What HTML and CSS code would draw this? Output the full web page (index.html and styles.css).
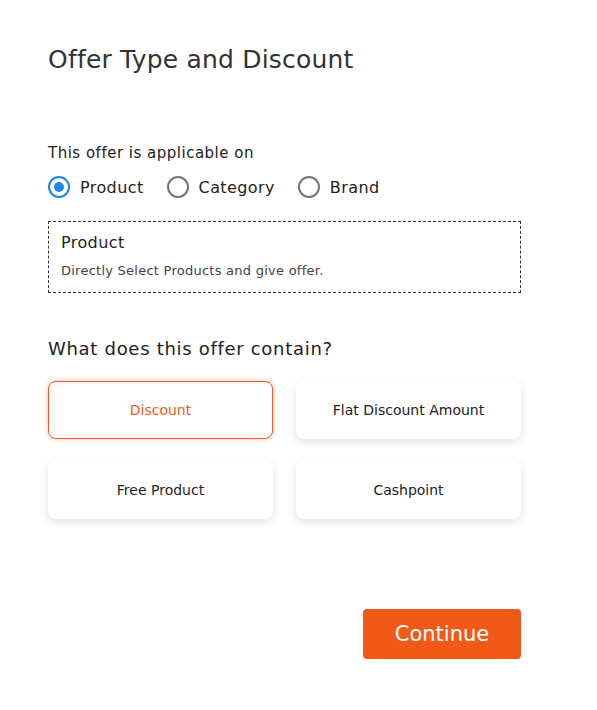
FILE: index.html
```html
<!DOCTYPE html>
<html>
<head>
<meta charset="utf-8">
<link rel="stylesheet" href="styles.css">
</head>
<body>
<div class="page">
  <h1 class="title">Offer Type and Discount</h1>

  <div class="label">This offer is applicable on</div>
  <div class="radios">
    <label class="radio"><span class="dot checked"></span><span class="rtext">Product</span></label>
    <label class="radio"><span class="dot"></span><span class="rtext">Category</span></label>
    <label class="radio"><span class="dot"></span><span class="rtext">Brand</span></label>
  </div>

  <div class="infobox">
    <div class="info-title">Product</div>
    <div class="info-desc">Directly Select Products and give offer.</div>
  </div>

  <div class="question">What does this offer contain?</div>

  <div class="cards">
    <div class="card selected">Discount</div>
    <div class="card">Flat Discount Amount</div>
    <div class="card">Free Product</div>
    <div class="card">Cashpoint</div>
  </div>

  <div class="actions">
    <button class="continue">Continue</button>
  </div>
</div>
</body>
</html>
```

FILE: styles.css
```css
html, body {
  margin: 0;
  padding: 0;
  background: #fff;
}
body {
  font-family: "DejaVu Sans", "Noto Sans", sans-serif;
  color: #222;
}
.page {
  width: 473px;
  padding: 44px 0 0 48px;
}
.title {
  margin: 0;
  font-size: 25px;
  font-weight: 400;
  line-height: 32px;
  color: #333;
  letter-spacing: 0.2px;
}
.label {
  margin-top: 67px;
  font-size: 15px;
  line-height: 20px;
  letter-spacing: 0.5px;
  color: #222;
}
.radios {
  display: flex;
  align-items: center;
  margin-top: 12px;
  height: 24px;
}
.radio {
  display: flex;
  align-items: center;
  margin-right: 23px;
}
.dot {
  box-sizing: border-box;
  width: 22px;
  height: 22px;
  border: 2px solid #757575;
  border-radius: 50%;
  margin-right: 10px;
  position: relative;
}
.dot.checked {
  border-color: #1e88e5;
}
.dot.checked::after {
  content: "";
  position: absolute;
  left: 4px;
  top: 4px;
  width: 10px;
  height: 10px;
  border-radius: 50%;
  background: #1e88e5;
}
.rtext {
  font-size: 16px;
  letter-spacing: 0.4px;
  color: #222;
}
.infobox {
  margin-top: 22px;
  border: 1px dashed #333;
  padding: 12px 12px 12px 12px;
  height: 46px;
}
.info-title {
  font-size: 16px;
  line-height: 18px;
  letter-spacing: 0.4px;
  color: #222;
}
.info-desc {
  margin-top: 11px;
  font-size: 13px;
  line-height: 16px;
  letter-spacing: 0.25px;
  color: #444;
}
.question {
  margin-top: 45px;
  font-size: 18px;
  line-height: 22px;
  letter-spacing: 0.7px;
  color: #222;
}
.cards {
  margin-top: 21px;
  display: grid;
  grid-template-columns: 225px 225px;
  column-gap: 23px;
  row-gap: 22px;
}
.card {
  box-sizing: border-box;
  height: 58px;
  border-radius: 8px;
  background: #fff;
  box-shadow: 0 3px 10px rgba(0, 0, 0, 0.12);
  display: flex;
  align-items: center;
  justify-content: center;
  font-size: 14px;
  color: #222;
}
.card.selected {
  border: 1px solid #f15a22;
  color: #f15a22;
  box-shadow: 0 0 4px rgba(241, 90, 34, 0.45);
}
.actions {
  margin-top: 90px;
  display: flex;
  justify-content: flex-end;
}
.continue {
  width: 158px;
  height: 50px;
  border: none;
  border-radius: 4px;
  background: #f15a16;
  color: #fff;
  font-family: "DejaVu Sans", "Noto Sans", sans-serif;
  font-size: 21px;
}
```
